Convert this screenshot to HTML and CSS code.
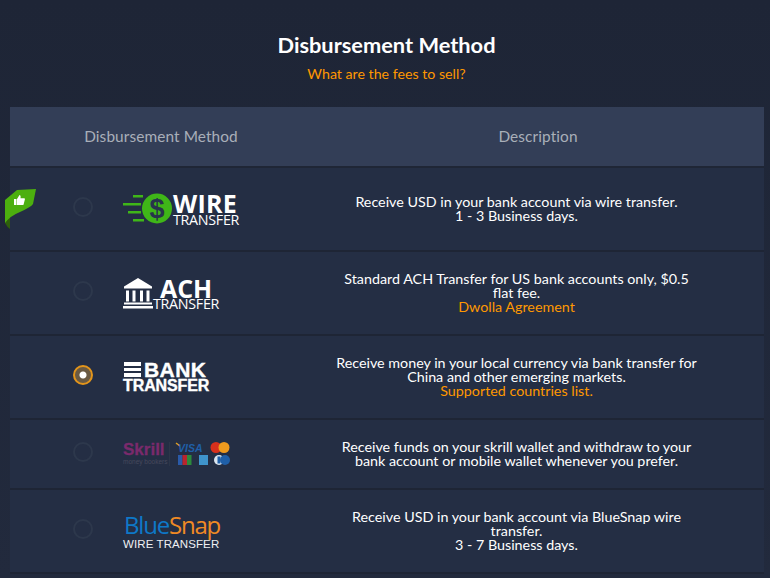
FILE: index.html
```html
<!DOCTYPE html>
<html lang="en">
<head>
<meta charset="utf-8">
<title>Disbursement Method</title>
<link rel="stylesheet" href="styles.css">
</head>
<body>
<header class="head">
  <h1>Disbursement Method</h1>
  <a class="fees">What are the fees to sell?</a>
</header>
<section class="table">
  <div class="thead">
    <div class="th">Disbursement Method</div>
    <div class="th">Description</div>
  </div>

  <div class="row">
    <div class="ribbon">
      <svg width="32" height="42" viewBox="0 0 32 42">
        <path d="M0 28 L0 34 Q2 38 5 40 L5 28Z" fill="#2f5f0c"/>
        <path d="M0 11 L12 1 L31 0 L28 15 Q26 18 15 23 Q5 27 0 34 Z" fill="#4caf0f"/>
        <path d="M9 10h2.500v6H9z M12 10l2.500-4q1.500 .2 1 3.200h4q.8 .5 .3 1.500l-1.200 4.800q-.3 .5-1 .5H12z" fill="#fff"/>
      </svg>
    </div>
    <div class="method">
      <span class="radio"></span>
      <div class="logo logo-wire">
        <svg width="50" height="32" viewBox="0 0 50 32">
          <g fill="#3fb618">
            <rect x="10" y="2" width="10" height="2.500"/><rect x="0" y="10" width="18" height="2.500"/>
            <rect x="5" y="18" width="13" height="2.500"/><rect x="10" y="26" width="11" height="2.500"/>
            <circle cx="34" cy="15.500" r="15"/>
          </g>
          <text x="34" y="25" class="dollar">$</text>
        </svg>
        <div class="wire-text"><span class="wire-big">WIRE</span><span class="wire-small">TRANSFER</span></div>
      </div>
    </div>
    <p class="desc">Receive USD in your bank account via wire transfer.<br>1 - 3 Business days.</p>
  </div>

  <div class="row">
    <div class="method">
      <span class="radio"></span>
      <div class="logo logo-ach">
        <svg width="30" height="31" viewBox="0 0 30 31">
          <g fill="#fff">
            <path d="M15 0 L29 8.500 V10.500 H1 V8.500Z"/>
            <rect x="3" y="12.500" width="3" height="11"/><rect x="9.500" y="12.500" width="3" height="11"/>
            <rect x="17" y="12.500" width="3" height="11"/><rect x="23.500" y="12.500" width="3" height="11"/>
            <rect x="1" y="24.500" width="28" height="2"/><rect x="0" y="28" width="30" height="2.500"/>
          </g>
        </svg>
        <div class="ach-text"><span class="ach-big">ACH</span><span class="ach-small">TRANSFER</span></div>
      </div>
    </div>
    <p class="desc">Standard ACH Transfer for US bank accounts only, $0.5 flat fee.<br><a class="link">Dwolla Agreement</a></p>
  </div>

  <div class="row">
    <div class="method">
      <span class="radio radio-on"></span>
      <div class="logo logo-bank">
        <div class="bank-top">
          <span class="bars"><i></i><i></i><i></i></span>
          <span class="bank-big">BANK</span>
        </div>
        <span class="bank-small">TRANSFER</span>
      </div>
    </div>
    <p class="desc">Receive money in your local currency via bank transfer for China and other emerging markets.<br><a class="link">Supported countries list.</a></p>
  </div>

  <div class="row row-short">
    <div class="method">
      <span class="radio"></span>
      <div class="logo logo-skrill">
        <div class="skrill-text"><span class="skrill-big">Skrill</span><span class="skrill-small">money bookers</span></div>
        <svg width="58" height="26" viewBox="0 0 58 26">
          <path d="M1 2l4 3" stroke="#e0a020" stroke-width="1.500"/>
          <text x="3" y="11" class="visa">VISA</text>
          <circle cx="41" cy="6.500" r="5.500" fill="#d8301c"/><circle cx="49" cy="6.500" r="5.500" fill="#ee9a1e"/>
          <rect x="3" y="14" width="4.500" height="10" fill="#2a5aa8"/><rect x="7.500" y="14" width="4.500" height="10" fill="#b8252e"/><rect x="12" y="14" width="4.500" height="10" fill="#2c8a3c"/>
          <rect x="24" y="14" width="9" height="10" fill="#3f94cc"/>
          <circle cx="44" cy="19" r="5" fill="#dbe6f0"/><circle cx="50" cy="19" r="5" fill="#1f5fa8"/><rect x="42.500" y="15.500" width="3" height="7" fill="#1f5fa8"/>
        </svg>
      </div>
    </div>
    <p class="desc">Receive funds on your skrill wallet and withdraw to your bank account or mobile wallet whenever you prefer.</p>
  </div>

  <div class="row">
    <div class="method">
      <span class="radio"></span>
      <div class="logo logo-snap">
        <div class="snap-name"><span class="snap-blue">Blue</span><span class="snap-orange">Snap</span></div>
        <span class="snap-small">WIRE TRANSFER</span>
      </div>
    </div>
    <p class="desc">Receive USD in your bank account via BlueSnap wire transfer.<br>3 - 7 Business days.</p>
  </div>
</section>
</body>
</html>
```
FILE: styles.css
```css
html, body { margin: 0; height: 100%; }
body {
  background: linear-gradient(#1e2536, #222a3d);
  font-family: "Lato", "Liberation Sans", sans-serif;
  color: #fff;
  overflow: hidden;
}
.head {
  height: 107px;
  padding-top: 31px;
  box-sizing: border-box;
  text-align: center;
  margin-left: 3px;
}
h1 {
  margin: 0;
  font-size: 21.800px;
  line-height: 28px;
  font-weight: 700;
}
.fees {
  display: block;
  margin-top: 6px;
  font-size: 14.200px;
  line-height: 18px;
  color: #ff9800;
}
.table { margin: 0 6px 0 10px; }
.thead {
  display: grid;
  grid-template-columns: 302px 1fr;
  height: 59px;
  background: #333e57;
  border-bottom: 2px solid #1f2636;
}
.th {
  display: flex;
  align-items: center;
  justify-content: center;
  padding-bottom: 1px;
  font-size: 15.400px;
  color: #a9afb9;
  letter-spacing: .1px;
}
.row {
  position: relative;
  display: grid;
  grid-template-columns: 302px 1fr;
  align-items: center;
  height: 82px;
  background: #242e44;
  border-bottom: 2px solid #1e2535;
}
.row-short { height: 68px; }
.ribbon {
  position: absolute;
  left: -5px;
  top: 21px;
  line-height: 0;
}
.method {
  display: flex;
  align-items: center;
  padding-left: 63px;
}
.radio {
  flex: none;
  box-sizing: border-box;
  width: 20px;
  height: 20px;
  border-radius: 50%;
  border: 2px solid #2d384c;
  margin-right: 30px;
  margin-bottom: 4px;
}
.radio-on {
  border-color: #e3951b;
  background: radial-gradient(circle, #fff 0 3px, #6a5a42 4px);
}
.logo { display: flex; align-items: center; line-height: 1; }
.logo-wire { height: 32px; }
.wire-text { display: flex; flex-direction: column; }
.wire-big { font-size: 25px; line-height: 21px; font-weight: 700; letter-spacing: .3px; font-family: "Open Sans", sans-serif; }
.wire-small { font-size: 14.300px; line-height: 12px; letter-spacing: -.3px; font-family: "Open Sans", sans-serif; }
.dollar { font: 700 27px "Liberation Sans", sans-serif; fill: #27344c; text-anchor: middle; }
.ach-text { display: flex; flex-direction: column; align-items: center; margin-top: 2px; }
.ach-big { font-size: 25px; line-height: 19px; font-weight: 700; font-family: "Open Sans", sans-serif; }
.ach-small { font-size: 14.300px; line-height: 12px; letter-spacing: -.3px; font-family: "Open Sans", sans-serif; }
.logo-bank { flex-direction: column; align-items: flex-start; font-family: "Liberation Sans", sans-serif; font-weight: 700; }
.bank-top { display: flex; align-items: center; height: 16px; margin-left: 1px; }
.bars { display: flex; flex-direction: column; gap: 2px; margin-right: 3px; }
.bars i { display: block; width: 17px; height: 3.500px; background: #fff; }
.bank-big { font-size: 21px; letter-spacing: .4px; -webkit-text-stroke: .4px #fff; }
.bank-small { font-size: 16px; line-height: 15px; letter-spacing: -.1px; -webkit-text-stroke: .4px #fff; }
.logo-skrill { gap: 5px; }
.skrill-text { display: flex; flex-direction: column; box-sizing: border-box; width: 47px; border-right: 1px solid #2c3649; height: 24px; }
.skrill-big { font: 700 17px/16px "Liberation Sans", sans-serif; color: #7a2a6c; -webkit-text-stroke: .3px #7a2a6c; }
.skrill-small { font: 6.500px/7px "Liberation Sans", sans-serif; color: #46495c; }
.visa { font: italic 700 10.500px "Liberation Sans", sans-serif; fill: #1f5fa8; }
.logo-snap { flex-direction: column; align-items: flex-start; font-family: "Liberation Sans", sans-serif; }
.snap-name { font: 24px/26px "Open Sans", sans-serif; letter-spacing: -1.200px; margin-left: 1px; }
.snap-blue { color: #0e78c8; }
.snap-orange { color: #f08a24; }
.snap-small { font-size: 11.500px; line-height: 12px; color: #eef0f3; letter-spacing: .1px; }
.desc {
  margin: 0 0 0 23px;
  width: 363px;
  text-align: center;
  font-size: 14.300px;
  line-height: 14px;
  color: #fff;
}
.link { color: #ff9800; }
```
